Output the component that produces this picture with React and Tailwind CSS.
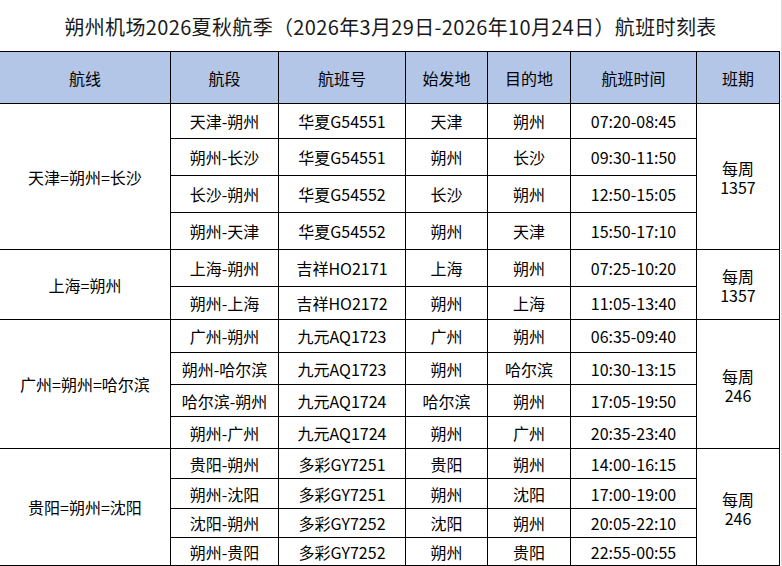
import React from "react";

const groups = [
  {
    route: "天津=朔州=长沙",
    period: ["每周", "1357"],
    rows: [
      ["天津-朔州", "华夏G54551", "天津", "朔州", "07:20-08:45", "h-[34px]"],
      ["朔州-长沙", "华夏G54551", "朔州", "长沙", "09:30-11:50", "h-[36px]"],
      ["长沙-朔州", "华夏G54552", "长沙", "朔州", "12:50-15:05", "h-[36px]"],
      ["朔州-天津", "华夏G54552", "朔州", "天津", "15:50-17:10", "h-[36px]"],
    ],
  },
  {
    route: "上海=朔州",
    period: ["每周", "1357"],
    rows: [
      ["上海-朔州", "吉祥HO2171", "上海", "朔州", "07:25-10:20", "h-[36px]"],
      ["朔州-上海", "吉祥HO2172", "朔州", "上海", "11:05-13:40", "h-[32px]"],
    ],
  },
  {
    route: "广州=朔州=哈尔滨",
    period: ["每周", "246"],
    rows: [
      ["广州-朔州", "九元AQ1723", "广州", "朔州", "06:35-09:40", "h-[32px]"],
      ["朔州-哈尔滨", "九元AQ1723", "朔州", "哈尔滨", "10:30-13:15", "h-[31px]"],
      ["哈尔滨-朔州", "九元AQ1724", "哈尔滨", "朔州", "17:05-19:50", "h-[31px]"],
      ["朔州-广州", "九元AQ1724", "朔州", "广州", "20:35-23:40", "h-[31px]"],
    ],
  },
  {
    route: "贵阳=朔州=沈阳",
    period: ["每周", "246"],
    rows: [
      ["贵阳-朔州", "多彩GY7251", "贵阳", "朔州", "14:00-16:15", "h-[29px]"],
      ["朔州-沈阳", "多彩GY7251", "朔州", "沈阳", "17:00-19:00", "h-[29px]"],
      ["沈阳-朔州", "多彩GY7252", "沈阳", "朔州", "20:05-22:10", "h-[28px]"],
      ["朔州-贵阳", "多彩GY7252", "朔州", "贵阳", "22:55-00:55", "h-[27px]"],
    ],
  },
];

const headers = ["航线", "航段", "航班号", "始发地", "目的地", "航班时间", "班期"];

const cell = "bg-white flex items-center justify-center text-center";

export default function App() {
  return (
    <div className="w-[782px] h-[566px] bg-white text-black overflow-hidden border-r border-[#d9d9d9] font-['Noto_Sans_CJK_SC','Noto_Sans',sans-serif]">
      <div className="h-[51px] flex items-center justify-center text-[20px] text-[#1a1a1a] pt-[2px] tracking-[0.35px]">
        朔州机场2026夏秋航季（2026年3月29日-2026年10月24日）航班时刻表
      </div>
      <div className="w-[780px] bg-black flex flex-col gap-[1px] pt-[1px] pr-[1px] pb-[1px] text-[16px]">
        <div className="grid grid-cols-[170px_107px_126px_81px_82px_125px_82px] gap-[1px] h-[51px]">
          {headers.map((h) => (
            <div key={h} className="bg-[#b4c6e7] flex items-center justify-center">
              {h}
            </div>
          ))}
        </div>
        {groups.map((g) => (
          <div key={g.route} className="flex gap-[1px]">
            <div className={`${cell} w-[170px]`}>{g.route}</div>
            <div className="flex flex-col gap-[1px] w-[525px]">
              {g.rows.map((r) => (
                <div
                  key={r[0]}
                  className={`grid grid-cols-[107px_126px_81px_82px_125px] gap-[1px] ${r[5]}`}
                >
                  {r.slice(0, 5).map((t, i) => (
                    <div key={i} className={cell}>
                      {t}
                    </div>
                  ))}
                </div>
              ))}
            </div>
            <div className={`${cell} w-[82px] flex-col gap-[3px] leading-none pt-[2px]`}>
              <span>{g.period[0]}</span>
              <span>{g.period[1]}</span>
            </div>
          </div>
        ))}
      </div>
    </div>
  );
}
